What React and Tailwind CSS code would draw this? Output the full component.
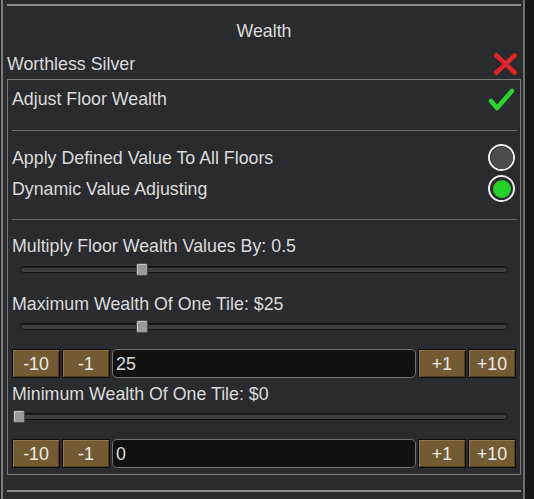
function Slider({ left }) {
  return (
    <div className="relative h-[13px] ml-[8px] mr-[9px]">
      <div className="absolute left-0 right-0 top-[3px] h-[7px] rounded-full bg-[#3d3e40] border border-[#111213] shadow-[inset_0_1px_0_#1c1c1c]" />
      <div
        className="absolute top-0 w-[12px] h-[13px] rounded-[2px] bg-[#9b9b9b] border border-[#4a4a4a] shadow-[inset_1px_1px_0_#c4c4c4]"
        style={{ left }}
      />
    </div>
  );
}

function Btn({ children }) {
  return (
    <div className="w-[48px] h-full flex items-center justify-center bg-[#725b31] border border-[#0e0e0e] shadow-[inset_1px_1px_0_#8f7647,inset_-1px_-1px_0_#4d3c1f] text-[#ececec]">
      {children}
    </div>
  );
}

function StepRow({ value }) {
  return (
    <div className="flex h-[29px] gap-[2px] mr-[1px]">
      <Btn>-10</Btn>
      <Btn>-1</Btn>
      <div className="flex-1 h-full flex items-center bg-[#111111] border border-[#707070] rounded-[5px] pl-[3px] text-[#dcdcdc]">
        {value}
      </div>
      <Btn>+1</Btn>
      <Btn>+10</Btn>
    </div>
  );
}

function Radio({ on }) {
  return (
    <div className="w-[27px] h-[27px] rounded-full border-[2.5px] border-[#ececec] flex items-center justify-center bg-[#2a2b2e]">
      {on ? (
        <div className="w-[18px] h-[18px] rounded-full bg-[#24d124]" />
      ) : (
        <div className="w-[22px] h-[22px] rounded-full bg-[#4b4c4e]" />
      )}
    </div>
  );
}

export default function App() {
  return (
    <div className="flex w-[534px] h-[499px] overflow-hidden bg-[#2a2b2e] text-[#dadada] font-['Liberation_Sans',Arial,sans-serif] text-[17.8px] leading-[20px]">
      <div className="w-[1px] bg-[#1b1c1f]" />
      <div className="w-[2px] bg-[#7d7d7d]" />
      <div className="flex-1 flex flex-col pl-[4px] pr-[2px]">
        <div className="mt-[4px] h-[2px] bg-[#8a8a8a]" />
        <div className="mt-[15px] text-center">Wealth</div>
        <div className="mt-[10px] h-[26px] flex items-center justify-between">
          <span>Worthless Silver</span>
          <svg width="25" height="24" viewBox="0 0 25 24" className="mr-[3px]">
            <g stroke="#e02626" strokeWidth="4.5" strokeLinecap="round">
              <line x1="3.5" y1="3.5" x2="21.5" y2="20.5" />
              <line x1="21.5" y1="3.5" x2="3.5" y2="20.5" />
            </g>
          </svg>
        </div>
        <div className="mt-[2px] border border-[#7a7a7a] flex flex-col pl-[4px] pr-[3px] pt-[7px] pb-[6px]">
          <div className="h-[24px] flex items-center justify-between">
            <span>Adjust Floor Wealth</span>
            <svg width="27" height="24" viewBox="0 0 27 24" className="mr-[2px]">
              <polyline
                points="3,14 9,21 24,4"
                fill="none"
                stroke="#2bd22b"
                strokeWidth="4.5"
                strokeLinecap="round"
                strokeLinejoin="round"
              />
            </svg>
          </div>
          <div className="mt-[19px] h-[1px] bg-[#6c6c6c]" />
          <div className="mt-[13px] h-[27px] flex items-center justify-between">
            <span>Apply Defined Value To All Floors</span>
            <div className="mr-[2px]">
              <Radio on={false} />
            </div>
          </div>
          <div className="mt-[4px] h-[27px] flex items-center justify-between">
            <span>Dynamic Value Adjusting</span>
            <div className="mr-[2px]">
              <Radio on={true} />
            </div>
          </div>
          <div className="mt-[17px] h-[1px] bg-[#6c6c6c]" />
          <div className="mt-[16px]">Multiply Floor Wealth Values By: 0.5</div>
          <div className="mt-[7px]">
            <Slider left={116} />
          </div>
          <div className="mt-[18px]">Maximum Wealth Of One Tile: $25</div>
          <div className="mt-[6px]">
            <Slider left={116} />
          </div>
          <div className="mt-[16px]">
            <StepRow value="25" />
          </div>
          <div className="mt-[6px]">Minimum Wealth Of One Tile: $0</div>
          <div className="mt-[6px]">
            <Slider left={-7} />
          </div>
          <div className="mt-[16px]">
            <StepRow value="0" />
          </div>
        </div>
        <div className="mt-[15px] h-[2px] bg-[#8a8a8a]" />
      </div>
      <div className="w-[2px] bg-[#6e6e6e]" />
      <div className="w-[9px] bg-[#16171a]" />
    </div>
  );
}
